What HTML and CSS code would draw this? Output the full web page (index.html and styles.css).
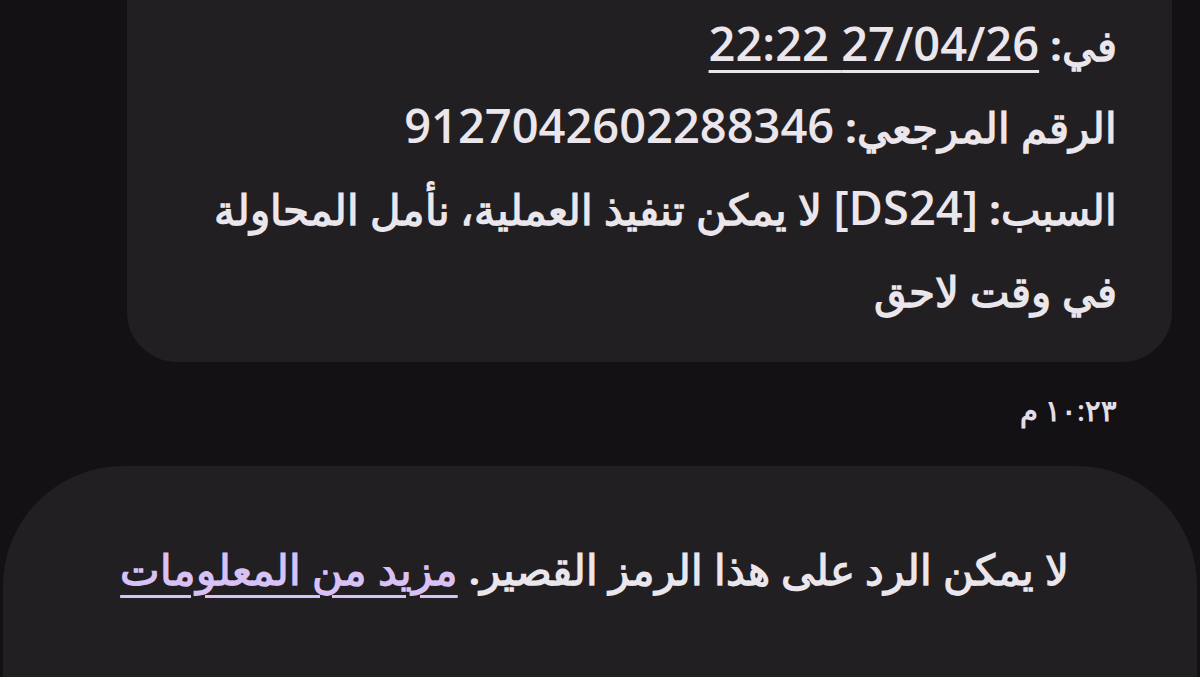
FILE: index.html
```html
<!DOCTYPE html>
<html lang="ar" dir="rtl">
<head>
<meta charset="utf-8">
<link rel="stylesheet" href="styles.css">
</head>
<body>
<div class="thread">
  <div class="bubble incoming">
    <p class="line">في: <span class="num link-plain">27/04/26 22:22</span></p>
    <p class="line">الرقم المرجعي: <span class="num">9127042602288346</span></p>
    <p class="line">السبب: <span class="num">[DS24]</span> لا يمكن تنفيذ العملية، نأمل المحاولة<br>في وقت لاحق</p>
  </div>
  <div class="stamp">١٠:٢٣ م</div>
  <div class="bubble notice">
    <p class="line">لا يمكن الرد على هذا الرمز القصير. <span class="link">مزيد من المعلومات</span></p>
  </div>
</div>
</body>
</html>
```

FILE: styles.css
```css
html, body {
  margin: 0;
  padding: 0;
  background: #141114;
  height: 100%;
  overflow: hidden;
}
body {
  font-family: "Open Sans", sans-serif;
  color: #ebe6ec;
}
.thread {
  display: flex;
  flex-direction: column;
}
.bubble {
  background: #211f22;
}
.incoming {
  margin: 0 28px 0 127px;
  padding: 4px 55px 30px 20px;
  border-radius: 0 0 50px 50px;
}
.line {
  margin: 0;
  font-size: 42px;
  line-height: 82px;
  font-weight: 700;
  white-space: nowrap;
}
.num {
  font-size: 47px;
  font-weight: 600;
  line-height: 1;
}
.link-plain {
  text-decoration: underline;
  text-decoration-thickness: 3px;
  text-underline-offset: 9px;
}
.stamp {
  margin: 28px 83px 0 0;
  font-size: 29px;
  line-height: 40px;
  color: #e3dde6;
  font-weight: 600;
}
.notice {
  margin: 36px 3px 0 3px;
  padding: 62px 128px 200px 60px;
  border-radius: 120px 120px 0 0;
}
.notice .line {
  font-size: 41.5px;
}
.link {
  color: #d8c1f5;
  text-decoration: underline;
  text-decoration-thickness: 3px;
  text-underline-offset: 10px;
}
```
